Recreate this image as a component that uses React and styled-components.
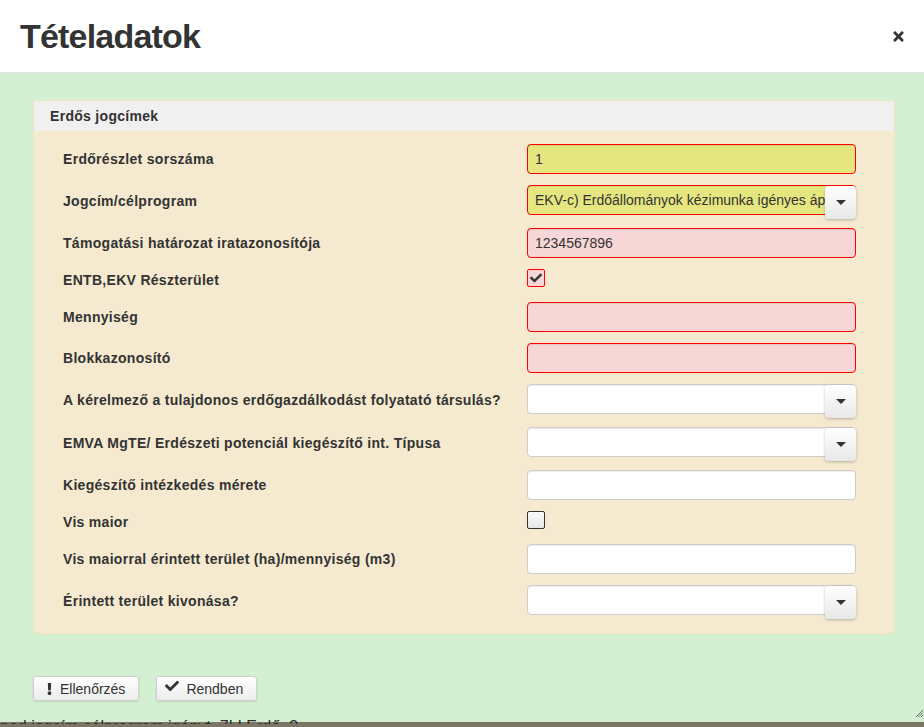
import React from "react";
import styled, { createGlobalStyle } from "styled-components";
import { FaTimes, FaCheck, FaExclamation } from "react-icons/fa";

const GlobalStyle = createGlobalStyle`
  body {
    margin: 0;
    font-family: "Liberation Sans", Arial, sans-serif;
    overflow: hidden;
  }
`;

const Page = styled.div`
  height: 727px;
  display: flex;
  flex-direction: column;
  background: #7b7665;
  overflow: hidden;
`;

const Dialog = styled.div`
  height: 722px;
  display: flex;
  flex-direction: column;
  flex-shrink: 0;
`;

const Header = styled.div`
  height: 72px;
  background: #fff;
  border-bottom: 1px solid #e5e5e5;
  display: flex;
  align-items: center;
  justify-content: space-between;
  padding: 0 18px 0 20px;
`;

const Title = styled.h1`
  margin: 0;
  font-size: 34px;
  font-weight: bold;
  letter-spacing: -0.8px;
  color: #333;
`;

const CloseBtn = styled.button`
  border: none;
  background: none;
  padding: 0;
  color: #333;
  display: flex;
  cursor: pointer;
`;

const Body = styled.div`
  flex: 1;
  position: relative;
  background: #d3f0d3;
  padding: 27px 29px 0 33px;
  display: flex;
  flex-direction: column;
`;

const Panel = styled.div`
  background: #f5ead0;
  border: 1px solid #efe3c4;
  border-radius: 4px;
  padding-bottom: 16px;
`;

const PanelHeading = styled.div`
  height: 30px;
  line-height: 31px;
  background: #f0f0f0;
  border-radius: 3px 3px 0 0;
  padding-left: 16px;
  font-size: 14px;
  font-weight: bold;
  letter-spacing: 0.3px;
  color: #333;
`;

const Form = styled.div`
  padding: 13px 0 0 29px;
  display: flex;
  flex-direction: column;
  gap: 11px;
`;

const Row = styled.div`
  display: grid;
  grid-template-columns: 464px 329px;
  align-items: center;
`;

const Label = styled.label`
  font-size: 14px;
  font-weight: bold;
  letter-spacing: 0.3px;
  color: #333;
`;

const colors = {
  ok: { bg: "#e6e680", border: "#ff0000" },
  err: { bg: "#f6d6d6", border: "#ff0000" },
  plain: { bg: "#fff", border: "#cccccc" },
};

const Input = styled.div`
  box-sizing: border-box;
  height: 30px;
  width: 329px;
  border: 1px solid ${({ $state }) => colors[$state].border};
  background: ${({ $state }) => colors[$state].bg};
  border-radius: 4px;
  box-shadow: inset 0 1px 1px rgba(0, 0, 0, 0.075);
  padding: 0 7px;
  font-size: 14px;
  line-height: 28px;
  color: #333;
  white-space: nowrap;
  overflow: hidden;
`;

const SelectWrap = styled.div`
  position: relative;
  height: 30px;
  margin-bottom: 2px;
`;

const DropBtn = styled.div`
  position: absolute;
  top: 1px;
  right: 0;
  width: 31px;
  height: 33px;
  box-sizing: border-box;
  border-radius: 4px;
  background: linear-gradient(#ffffff, #e8e8e8);
  box-shadow: 0 1px 3px rgba(0, 0, 0, 0.25);
  display: flex;
  align-items: center;
  justify-content: center;

  &::after {
    content: "";
    border-left: 5px solid transparent;
    border-right: 5px solid transparent;
    border-top: 5px solid #333;
  }
`;

const CheckBox = styled.div`
  box-sizing: border-box;
  width: 18px;
  height: 18px;
  margin: 0 0 4px;
  border-radius: 2px;
  border: 1px solid ${({ $checked }) => ($checked ? "#ff0000" : "#333")};
  background: ${({ $checked }) =>
    $checked ? "#f6d6d6" : "linear-gradient(#fbfbfb, #e6e6e6)"};
  display: flex;
  align-items: center;
  justify-content: center;
  color: #333;
`;

const Footer = styled.div`
  margin-top: 42px;
  display: flex;
  gap: 17px;
`;

const Button = styled.button`
  height: 25px;
  display: flex;
  align-items: center;
  gap: ${({ $gap }) => $gap}px;
  padding: 0 13px 0 ${({ $pl }) => $pl}px;
  border: 1px solid #d0d0d0;
  border-radius: 3px;
  background: linear-gradient(#ffffff, #ececec);
  box-shadow: 0 1px 2px rgba(0, 0, 0, 0.12);
  font-family: "Liberation Sans", Arial, sans-serif;
  font-size: 14px;
  color: #333;
`;

const Grip = styled.svg`
  position: absolute;
  right: 1px;
  bottom: 5px;
`;

const Strip = styled.div`
  height: 5px;
  overflow: hidden;
  font-size: 16px;
  line-height: 16px;
  color: #2e2e2e;
  white-space: nowrap;
  margin-top: -3px;
  position: relative;
`;

const Select = ({ state, value }) => (
  <SelectWrap>
    <Input $state={state}>{value}</Input>
    <DropBtn />
  </SelectWrap>
);

const rows = [
  { label: "Erdőrészlet sorszáma", type: "input", state: "ok", value: "1" },
  {
    label: "Jogcím/célprogram",
    type: "select",
    state: "ok",
    value: "EKV-c) Erdőállományok kézimunka igényes áp",
  },
  {
    label: "Támogatási határozat iratazonosítója",
    type: "input",
    state: "err",
    value: "1234567896",
  },
  { label: "ENTB,EKV Részterület", type: "check", checked: true },
  { label: "Mennyiség", type: "input", state: "err" },
  { label: "Blokkazonosító", type: "input", state: "err" },
  {
    label: "A kérelmező a tulajdonos erdőgazdálkodást folyatató társulás?",
    type: "select",
    state: "plain",
  },
  {
    label: "EMVA MgTE/ Erdészeti potenciál kiegészítő int. Típusa",
    type: "select",
    state: "plain",
  },
  { label: "Kiegészítő intézkedés mérete", type: "input", state: "plain" },
  { label: "Vis maior", type: "check", checked: false },
  {
    label: "Vis maiorral érintett terület (ha)/mennyiség (m3)",
    type: "input",
    state: "plain",
  },
  { label: "Érintett terület kivonása?", type: "select", state: "plain" },
];

const App = () => {
  return (
    <>
      <GlobalStyle />
      <Page>
        <Dialog>
          <Header>
            <Title>Tételadatok</Title>
            <CloseBtn>
              <FaTimes size={15} />
            </CloseBtn>
          </Header>
          <Body>
            <Panel>
              <PanelHeading>Erdős jogcímek</PanelHeading>
              <Form>
                {rows.map((r) => (
                  <Row key={r.label}>
                    <Label>{r.label}</Label>
                    {r.type === "input" && (
                      <Input $state={r.state}>{r.value}</Input>
                    )}
                    {r.type === "select" && (
                      <Select state={r.state} value={r.value} />
                    )}
                    {r.type === "check" && (
                      <CheckBox $checked={r.checked}>
                        {r.checked && <FaCheck size={12} />}
                      </CheckBox>
                    )}
                  </Row>
                ))}
              </Form>
            </Panel>
            <Footer>
              <Button $pl={13} $gap={8}>
                <FaExclamation style={{ width: 5, height: 12 }} />
                Ellenőrzés
              </Button>
              <Button $pl={8} $gap={7}>
                <FaCheck size={14} style={{ marginTop: -6 }} />
                Rendben
              </Button>
            </Footer>
            <Grip width="8" height="8" viewBox="0 0 8 8">
              <path
                d="M1 8 L8 1 M3.5 8 L8 3.5 M6 8 L8 6"
                stroke="#666"
                strokeWidth="1"
              />
            </Grip>
          </Body>
        </Dialog>
        <Strip>ned jogcím-célprogram igényt. 7! I Erdő..?</Strip>
      </Page>
    </>
  );
};

export default App;
